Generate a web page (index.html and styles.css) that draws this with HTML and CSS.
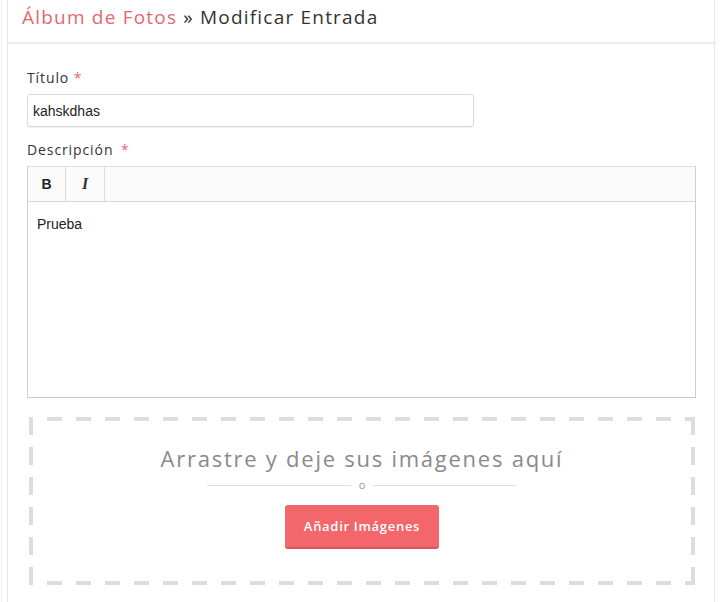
FILE: index.html
```html
<!DOCTYPE html>
<html lang="es">
<head>
<meta charset="utf-8">
<title>Modificar Entrada</title>
<link rel="stylesheet" href="styles.css">
</head>
<body>
<div class="frame">
  <div class="panel">
    <div class="panel-head">
      <h1 class="title"><span class="crumb">Álbum de Fotos</span> » Modificar Entrada</h1>
    </div>
    <div class="panel-body">
      <div class="field">
        <label class="label">Título <span class="req">*</span></label>
        <input class="input" type="text" value="kahskdhas">
      </div>
      <div class="field">
        <label class="label">Descripción <span class="req req-gap">*</span></label>
        <div class="editor">
          <div class="toolbar">
            <span class="tool tool-b">B</span>
            <span class="tool tool-i">I</span>
          </div>
          <div class="editor-content">Prueba</div>
        </div>
      </div>
      <div class="dropzone">
        <div class="drop-text">Arrastre y deje sus imágenes aquí</div>
        <div class="divider"><span class="line"></span><span class="or">o</span><span class="line"></span></div>
        <button class="btn" type="button">Añadir Imágenes</button>
      </div>
    </div>
  </div>
</div>
</body>
</html>
```
FILE: styles.css
```css
html, body {
  margin: 0;
  padding: 0;
  background: #ffffff;
}
body {
  font-family: "Open Sans", "Liberation Sans", sans-serif;
  color: #333;
  height: 602px;
  overflow: hidden;
}
.frame {
  padding-left: 2px;
  border-left: 1px solid #f0f0f0;
  margin-left: 1px;
  width: 714px;
  height: 602px;
  box-sizing: border-box;
  border-right: 1px solid #f0f0f0;
}
.panel {
  margin-left: 3px;
  width: 708px;
  height: 602px;
  box-sizing: border-box;
  border-left: 1px solid #e6e6e6;
  border-right: 1px solid #e6e6e6;
}
.panel-head {
  height: 44px;
  box-sizing: border-box;
  border-bottom: 2px solid #eeeeee;
  padding: 5px 0 0 14px;
  margin-right: -3px;
}
.title {
  margin: 0;
  font-size: 19px;
  font-weight: 500;
  color: #333;
  letter-spacing: 1.2px;
  line-height: 24px;
}
.crumb {
  color: #e4686f;
}
.panel-body {
  padding: 25px 19px 0 19px;
}
.field {
  display: flex;
  flex-direction: column;
}
.label {
  font-size: 14px;
  font-weight: 500;
  color: #333;
  line-height: 18px;
  margin-bottom: 7px;
  letter-spacing: 0.9px;
}
.req {
  color: #e4686f;
}
.req-gap {
  margin-left: 3px;
}
.input {
  width: 447px;
  height: 33px;
  box-sizing: border-box;
  border: 1px solid #d9d9d9;
  border-radius: 3px;
  padding: 0 5px;
  font-family: "Liberation Sans", Arial, sans-serif;
  font-size: 14px;
  color: #222;
  box-shadow: 0 1px 1px rgba(0,0,0,0.06);
  margin-bottom: 14px;
  outline: none;
}
.editor {
  width: 669px;
  border-left: 1px solid #cfcfcf;
  border-right: 1px solid #cfcfcf;
  border-bottom: 1px solid #c9c9c9;
  border-top: 1px solid #e0e0e0;
  box-sizing: border-box;
}
.toolbar {
  display: flex;
  height: 34px;
  background: #fafafa;
  border-bottom: 1px solid #d6d6d6;
}
.tool {
  width: 37px;
  display: flex;
  align-items: center;
  justify-content: center;
  border-right: 1px solid #dcdcdc;
  font-family: "Liberation Sans", Arial, sans-serif;
  font-size: 14px;
  color: #222;
}
.tool-b {
  font-weight: bold;
}
.tool-i {
  width: 38px;
  font-family: "Liberation Serif", serif;
  font-style: italic;
  font-weight: bold;
  font-size: 16px;
  color: #333;
}
.editor-content {
  height: 195px;
  padding: 14px 9px;
  box-sizing: border-box;
  font-family: "Liberation Sans", Arial, sans-serif;
  font-size: 14px;
  color: #222;
}
.dropzone {
  margin-top: 19px;
  margin-left: 2px;
  width: 666px;
  height: 168px;
  box-sizing: border-box;
  display: flex;
  flex-direction: column;
  align-items: center;
  padding-top: 26px;
  background-image:
    repeating-linear-gradient(90deg, #dddddd 0 15px, transparent 15px 29px),
    repeating-linear-gradient(90deg, #dddddd 0 15px, transparent 15px 29px),
    repeating-linear-gradient(180deg, #dddddd 0 18px, transparent 18px 30px),
    repeating-linear-gradient(180deg, #dddddd 0 18px, transparent 18px 30px);
  background-size: 100% 4px, 100% 4px, 4px 100%, 4px 100%;
  background-position: 18px 0, 18px 100%, 0 0, 100% 0;
  background-repeat: no-repeat;
}
.drop-text {
  font-size: 22px;
  color: #8a8a8a;
  font-weight: 400;
  line-height: 30px;
  letter-spacing: 1.75px;
}
.divider {
  display: flex;
  align-items: center;
  width: 310px;
  margin-top: 5px;
  gap: 8px;
}
.line {
  flex: 1;
  height: 1px;
  background: #e0e0e0;
}
.or {
  font-size: 11px;
  color: #999;
  line-height: 14px;
}
.btn {
  margin-top: 13px;
  width: 154px;
  height: 44px;
  background: #f2666c;
  border: none;
  border-bottom: 2px solid #d9555b;
  border-radius: 3px;
  color: #ffffff;
  font-family: "Open Sans", "Liberation Sans", sans-serif;
  font-weight: 600;
  font-size: 13px;
  letter-spacing: 0.7px;
  cursor: pointer;
}
```
